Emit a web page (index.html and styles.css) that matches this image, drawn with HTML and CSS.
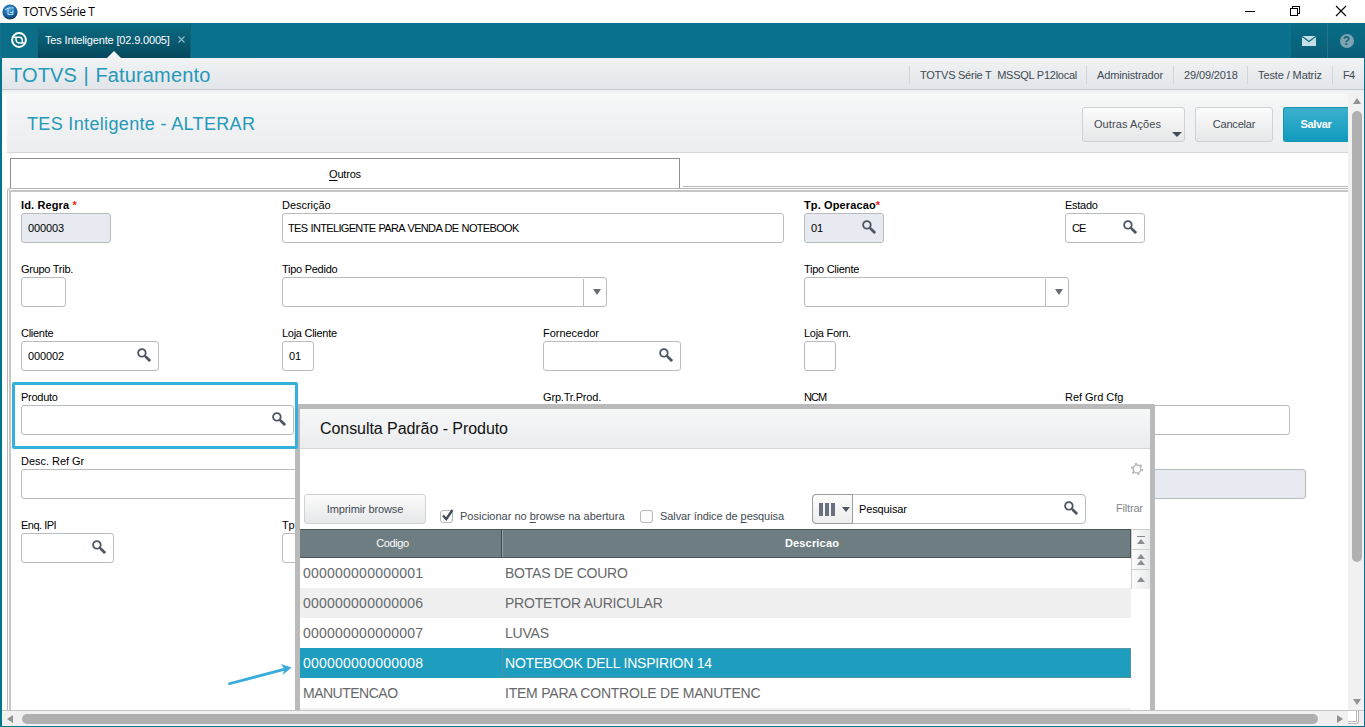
FILE: index.html
```html
<!DOCTYPE html>
<html lang="pt-BR">
<head>
<meta charset="utf-8">
<title>TOTVS Série T</title>
<link rel="stylesheet" href="styles.css">
</head>
<body>
<svg width="0" height="0" class="defs">
  <symbol id="lens" viewBox="0 0 14 14"><circle cx="4.9" cy="4.9" r="3.8" fill="none" stroke="#4d5563" stroke-width="1.8"/><path d="M7.6 7.6l1.500 1.500" stroke="#4d5563" stroke-width="1.800"/><path d="M8.500 8.500l4.600 4.600" stroke="#4d5563" stroke-width="2.7"/></symbol>
</svg>
<header class="titlebar">
  <svg class="app-icon" width="16" height="16" viewBox="0 0 16 16"><defs><radialGradient id="orb" cx=".45" cy=".35" r=".65"><stop offset="0" stop-color="#4aa3dc"/><stop offset=".6" stop-color="#1767a8"/><stop offset="1" stop-color="#143a5e"/></radialGradient></defs><circle cx="8" cy="8" r="7.6" fill="url(#orb)"/><path d="M3 5.5Q7 3 12 4M6 4v6.5h5V6M8 8.5h3" fill="none" stroke="#c9e6f7" stroke-width=".9"/></svg>
  <span class="app-name">TOTVS Série T</span>
  <svg class="win-buttons" width="106" height="14" viewBox="0 0 106 14" fill="none" stroke="#000" shape-rendering="crispEdges"><path d="M2 7.5h10"/><path d="M47.5 4.5h7v7h-7zM49.5 4.5v-2h7v7h-2"/><path d="M93 2l10 10M103 2l-10 10" stroke-width="1.1" shape-rendering="auto"/></svg>
</header>
<nav class="tabstrip">
  <div class="home"><svg width="18" height="18" viewBox="0 0 18 18" fill="none" stroke="#fff"><circle cx="9" cy="9" r="6.900" stroke-width="2"/><path d="M2.800 6.200H9.500Q12.300 6.500 12.300 9V12" stroke-width="1.500"/><path d="M6 6.200V8.800Q6.200 11.700 9 11.900H15.200" stroke-width="1.500"/></svg></div>
  <div class="tab"><span class="tab-text">Tes Inteligente [02.9.0005]</span><svg width="7" height="7" viewBox="0 0 7 7"><path d="M.5.5l6 6M6.500.5l-6 6" stroke="#8fc0cb" stroke-width="1.1"/></svg><i class="notch"></i></div>
  <div class="tool mail"><svg width="14" height="10" viewBox="0 0 14 10"><path d="M0 0h14v10H0z" fill="#c5dfe6"/><path d="M0 0.300L7 5.500 14 .3" fill="none" stroke="#0b6880" stroke-width="1.2"/></svg></div>
  <div class="tool help"><span class="help-dot">?</span></div>
</nav>
<div class="window">
  <div class="infobar">
    <h1>TOTVS | Faturamento</h1>
    <ul class="session"><li class="i1">TOTVS Série T&nbsp; MSSQL P12local</li><li class="i2">Administrador</li><li class="i3">29/09/2018</li><li class="i4">Teste / Matriz</li><li class="i5">F4</li></ul>
  </div>
  <div class="viewport">
    <main class="workspace">
      <div class="page-head">
        <h2>TES Inteligente - ALTERAR</h2>
        <button class="btn more">Outras Ações<i class="caret"></i></button>
        <button class="btn cancel">Cancelar</button>
        <button class="btn save">Salvar</button>
      </div>
      <div class="folder"><div class="folder-tab"><span><u>O</u>utros</span></div><div class="folder-rest"></div></div>
      <section class="form-frame">
        <div class="form">
          <div class="field"><label class="req">Id. Regra <em>*</em></label><div class="box w90 off">000003</div></div>
          <div class="field c2"><label class="wide">Descrição</label><div class="box w502"><span class="caps">TES INTELIGENTE PARA VENDA DE NOTEBOOK</span></div></div>
          <div class="field c4"><label class="req">Tp. Operacao<em>*</em></label><div class="box w80 off look">01<svg><use href="#lens"/></svg></div></div>
          <div class="field c5"><label>Estado</label><div class="box w80 look"><span class="narrow">CE</span><svg><use href="#lens"/></svg></div></div>

          <div class="field r2"><label>Grupo Trib.</label><div class="box w45"></div></div>
          <div class="field r2 c2"><label>Tipo Pedido</label><div class="box w325 select"><i class="drop"></i></div></div>
          <div class="field r2 c4"><label>Tipo Cliente</label><div class="box w265 select"><i class="drop"></i></div></div>

          <div class="field r3"><label>Cliente</label><div class="box w138 look">000002<svg><use href="#lens"/></svg></div></div>
          <div class="field r3 c2"><label>Loja Cliente</label><div class="box w32">01</div></div>
          <div class="field r3 c3"><label class="wide">Fornecedor</label><div class="box w138 look"><svg><use href="#lens"/></svg></div></div>
          <div class="field r3 c4"><label>Loja Forn.</label><div class="box w32"></div></div>

          <div class="field r4"><label>Produto</label><div class="box w273 look"><svg><use href="#lens"/></svg></div></div>
          <div class="field r4 c3"><label class="mid">Grp.Tr.Prod.</label></div>
          <div class="field r4 c4"><label class="ncm">NCM</label></div>
          <div class="field r4 c5"><label class="wide">Ref Grd Cfg</label><div class="box w225"></div></div>

          <div class="field r5"><label class="wide">Desc. Ref Gr</label><div class="box w502"></div></div>
          <div class="field r5 c5"><label></label><div class="box w241 off"></div></div>

          <div class="field r6"><label class="tight">Enq. IPI</label><div class="box w93 look"><svg><use href="#lens"/></svg></div></div>
          <div class="field r6 c2"><label>Tp</label><div class="box w32"></div></div>
        </div>
      </section>
    </main>
    <div class="vscroll"><i class="arrow up"></i><div class="thumb"></div><i class="arrow down"></i></div>
  </div>
  <div class="hscroll"><i class="arrow left"></i><div class="thumb"></div><i class="arrow right"></i><div class="corner"></div></div>
</div>

<section class="dialog">
  <h3>Consulta Padrão - Produto</h3>
  <div class="settings"><svg width="14" height="14" viewBox="0 0 14 14"><circle cx="7" cy="7" r="3.9" fill="none" stroke="#b9b9b9" stroke-width="1.500"/><circle cx="7" cy="7" r="5.300" fill="none" stroke="#b9b9b9" stroke-width="1.800" stroke-dasharray="2.200 3.350"/></svg></div>
  <div class="search-row">
    <button class="btn print">Imprimir browse</button>
    <span class="check on"><svg width="15" height="15" viewBox="0 0 15 15"><path d="M3 7.500l3.200 3.700L12.500 2" fill="none" stroke="#414a58" stroke-width="2.300"/></svg></span>
    <span class="check-text t1">Posicionar no <u>b</u>rowse na abertura</span>
    <span class="check"></span>
    <span class="check-text t2">Salvar índice de <u>p</u>esquisa</span>
    <div class="search"><div class="columns"><i></i><i></i><i></i><b></b></div><span>Pesquisar</span><svg><use href="#lens"/></svg></div>
    <span class="filter">Filtrar</span>
  </div>
  <div class="grid-wrap">
    <div class="grid">
      <div class="row head"><span class="h1c">Codigo</span><span class="h2c">Descricao</span></div>
      <div class="row"><span>000000000000001</span><span>BOTAS DE COURO</span></div>
      <div class="row alt"><span>000000000000006</span><span>PROTETOR AURICULAR</span></div>
      <div class="row"><span>000000000000007</span><span>LUVAS</span></div>
      <div class="row sel"><span>000000000000008</span><span>NOTEBOOK DELL INSPIRION 14</span></div>
      <div class="row"><span class="alpha">MANUTENCAO</span><span>ITEM PARA CONTROLE DE MANUTENC</span></div>
      <div class="row alt"></div>
    </div>
    <div class="nav"><div class="nav-btn top"><i></i></div><div class="nav-btn page"><i></i><i></i></div><div class="nav-btn line"><i></i></div></div>
  </div>
</section>
<div class="highlight"></div>
<svg class="pointer" width="70" height="28" viewBox="0 0 70 28"><path d="M3.300 23L60 8.200" stroke="#38abdc" stroke-width="2.800"/><path d="M66.500 6.500L56 3 59.500 8.300 57.700 14z" fill="#38abdc"/></svg>
</body>
</html>
```
FILE: styles.css
```css
* { box-sizing: border-box; }
body { margin: 0; width: 1365px; height: 727px; overflow: hidden; position: relative; display: flex; flex-direction: column; background: #fff; font: 11px/15px "Liberation Sans", Arial, sans-serif; color: #000; }
h1, h2, h3, ul { margin: 0; padding: 0; font-weight: normal; list-style: none; }
.defs { position: absolute; }
i, em { font-style: normal; }
u { text-underline-offset: 2px; }

/* title bar */
.titlebar { height: 23px; flex: none; display: flex; align-items: center; padding-left: 2px; }
.app-name { font: 12px/22px "Open Sans", "Noto Sans", sans-serif; letter-spacing: -.43px; margin-left: 5px; flex: 1; }
.win-buttons { margin: -2px 16px 0 0; }

/* tab strip */
.tabstrip { height: 35px; flex: none; display: flex; background: #0a728e; padding-left: 2px; color: #fff; }
.home { width: 36px; padding: 8px 0 0 7px; background: #0a6e88; border-right: 1px solid #1b6577; border-left: 1px solid #16697c; }
.tab { position: relative; width: 153px; display: flex; align-items: center; gap: 8px; padding-left: 7px; background: linear-gradient(#0a6c86, #06495c); border-right: 1px solid #0d6278; letter-spacing: -.16px; }
.tab svg { margin-top: -3px; }
.notch { position: absolute; left: 69px; bottom: 0; border: 7px solid transparent; border-top: 0; border-bottom-color: #f1f3f5; }
.tool { background: linear-gradient(#0a6c86, #085f77); display: flex; align-items: center; justify-content: center; border-right: 1px solid #24758a; }
.mail { width: 37px; margin-left: auto; }
.help { width: 37px; border: 0; }
.help-dot { width: 14px; height: 14px; border-radius: 50%; background: #7fa3b0; color: #0a6178; font-weight: bold; line-height: 14px; text-align: center; font-size: 12px; }

/* framed window */
.window { flex: 1; display: flex; flex-direction: column; border: solid #00768c; border-width: 0 1px 1px 2px; min-height: 0; }
.infobar { height: 32px; flex: none; display: flex; align-items: center; padding-left: 8px; background: linear-gradient(#f1f3f5, #e2e5e9); border-bottom: 1px solid #c3c7cb; }
.infobar h1 { font-size: 20px; line-height: 24px; letter-spacing: .15px; word-spacing: .8px; color: #2499b9; margin: 2px auto 0 0; }
.session { display: flex; color: #414a52; line-height: 18px; margin-top: 3px; }
.session li { height: 18px; border-left: 1px solid #d2d6da; padding-left: 10px; white-space: nowrap; }
.i1 { width: 177px; letter-spacing: -.25px; }
.i2 { width: 87px; letter-spacing: -.15px; }
.i3 { width: 74px; letter-spacing: -.12px; }
.i4 { width: 85px; letter-spacing: -.11px; }
.i5 { width: 32px; letter-spacing: -.6px; }
.viewport { flex: 1; min-height: 0; display: flex; background: #f0f1f2; }
.workspace { width: 1346px; padding-top: 3px; overflow: hidden; display: flex; flex-direction: column; background: linear-gradient(#eff1f3 3px, #fff 3px); }
.page-head { height: 60px; flex: none; margin-left: 5px; display: flex; align-items: center; padding: 3px 0 0 20px; background: linear-gradient(#f6f7f7, #ebedef); border-bottom: 1px solid #d5d7da; }
.page-head h2 { font-size: 18px; line-height: 22px; letter-spacing: .34px; color: #2499b9; margin-right: auto; }
.btn { font: 11px/15px "Liberation Sans", Arial, sans-serif; color: #414a52; height: 35px; padding: 0; border: 1px solid #cfd1d3; border-radius: 3px; background: linear-gradient(#fcfcfc, #e6e7e8); white-space: nowrap; flex: none; }
.more { width: 103px; position: relative; padding-right: 12px; letter-spacing: .09px; }
.caret { position: absolute; right: 2px; bottom: 4px; border: 5px solid transparent; border-bottom: 0; border-top-color: #414a55; }
.cancel { width: 78px; margin-left: 10px; letter-spacing: -.2px; }
.save { width: 65px; margin-left: 10px; color: #fff; font-weight: bold; letter-spacing: -.3px; border: 1px solid #1792b2; border-right: 0; border-radius: 3px 0 0 3px; background: linear-gradient(#3cb0ce, #119bbd); }

/* folder and form */
.folder { height: 35px; flex: none; display: flex; padding: 5px 0 0 8px; gap: 3px; }
.folder-tab { width: 670px; border: 1px solid #8e8e8e; border-bottom: 0; display: flex; align-items: center; justify-content: center; letter-spacing: -.2px; padding-top: 2px; }
.folder-rest { flex: 1; height: 29px; border-bottom: 1px solid #b8b8b8; }
.form-frame { flex: 1; min-height: 0; margin-left: 5px; border: solid #b8b8b8; border-width: 1px 0 0 1px; border-top-left-radius: 3px; padding: 1px 0 0 1px; }
.form { height: 100%; border: solid #c6c6c6; border-width: 2px 0 0 2px; padding: 6px 0 0 10px; display: grid; grid-template-columns: repeat(5, 261px); grid-auto-rows: 64px; overflow: hidden; }
.field { grid-column: 1; grid-row: 1; min-width: 0; display: flex; flex-direction: column; }
.c2 { grid-column: 2; } .c3 { grid-column: 3; } .c4 { grid-column: 4; } .c5 { grid-column: 5; }
.r2 { grid-row: 2; } .r3 { grid-row: 3; } .r4 { grid-row: 4; } .r5 { grid-row: 5; } .r6 { grid-row: 6; }
label { height: 15px; letter-spacing: -.27px; white-space: nowrap; flex: none; }
label.wide { letter-spacing: -.03px; }
label.mid { letter-spacing: -.17px; }
label.tight { letter-spacing: -.5px; }
label.ncm { letter-spacing: -.9px; }
label.req { font-weight: bold; letter-spacing: .13px; }
.req em { color: #f02020; }
.box { height: 30px; flex: none; border: 1px solid #b9bbbe; border-radius: 3px; background: #fff; display: flex; align-items: center; padding-left: 6px; letter-spacing: -.12px; white-space: nowrap; }
.off { background: #e7eaf1; }
.w502 { padding-left: 5px; }
.caps { letter-spacing: -.66px; word-spacing: .7px; }
.narrow { letter-spacing: -.9px; }
.look { padding-right: 7px; }
.look svg { width: 14px; height: 14px; margin: -2px 0 0 auto; }
.w32 { width: 32px; } .w45 { width: 45px; } .w80 { width: 80px; } .w90 { width: 90px; } .w93 { width: 93px; } .w138 { width: 138px; } .w225 { width: 225px; } .w241 { width: 241px; } .w265 { width: 265px; } .w273 { width: 273px; } .w325 { width: 325px; } .w502 { width: 502px; }
.select { justify-content: flex-end; }
.drop { width: 23px; height: 27px; border-left: 1px solid #b9bbbe; display: flex; align-items: center; padding-left: 9px; }
.drop::after { content: ""; border: 4px solid transparent; border-top: 6px solid #666e79; border-bottom: 0; }

/* scroll bars */
.vscroll { width: 16px; padding: 8px 2px 5px 3px; background: #f1f1f1; display: flex; flex-direction: column; align-items: center; }
.vscroll .thumb { width: 10px; height: 451px; margin: 7px 0 auto; border-radius: 5px; background: #b0b0b0; }
.hscroll { height: 16px; flex: none; display: flex; align-items: center; padding-left: 5px; background: #f0f0f0; border-top: 1px solid #c4c4c4; }
.hscroll .thumb { width: 1296px; height: 10px; margin-left: 9px; border-radius: 5px; background: #b0b0b0; }
.arrow { border: 4px solid transparent; }
.up { border-top: 0; border-bottom: 6px solid #929292; }
.down { border-bottom: 0; border-top: 6px solid #929292; }
.left { border-left: 0; border-right: 6px solid #929292; }
.right { border-right: 0; border-left: 6px solid #929292; margin-left: 19px; }
.corner { width: 11px; height: 13px; margin: -3px 0 0 5px; border: solid #b8b8b8; border-width: 0 3px 3px 0; border-style: double; border-radius: 0 0 3px 0; background: #fff; }

/* lookup dialog */
.dialog { position: absolute; left: 295px; top: 404px; width: 860px; height: 306px; overflow: hidden; border: 5px solid #bababa; border-bottom: 0; border-radius: 2px 2px 0 0; background: #fff; color: #414a52; display: flex; flex-direction: column; }
.dialog h3 { height: 40px; flex: none; padding-left: 20px; font-size: 16px; line-height: 40px; letter-spacing: -.06px; color: #111; background: linear-gradient(#f6f7f7, #eaecee); border-bottom: 1px solid #d3d5d7; }
.settings { height: 45px; flex: none; display: flex; justify-content: flex-end; padding: 13px 6px 0 0; }
.search-row { height: 35px; flex: none; display: flex; padding-left: 4px; }
.print { width: 122px; height: 30px; letter-spacing: -.12px; }
.check { width: 13px; height: 13px; margin: 16px 0 0 14px; border: 1px solid #b5b7b9; border-radius: 3px; background: #fcfcfc; position: relative; }
.check ~ .check { margin-left: 15px; }
.check svg { position: absolute; left: -1px; top: -3px; }
.check-text { margin: 15px 0 0 7px; white-space: nowrap; }
.t1 { width: 165px; }
.t2 { width: 124px; letter-spacing: -.08px; }
.search { width: 274px; height: 30px; margin-left: 28px; border: 1px solid #b9bbbe; border-radius: 4px; display: flex; align-items: center; color: #000; padding-right: 7px; }
.search span { margin-left: 6px; letter-spacing: -.12px; }
.search svg { width: 14px; height: 14px; margin: -2px 0 0 auto; }
.columns { width: 41px; height: 30px; margin: -1px 0 -1px -1px; border: 1px solid #9a9c9f; border-radius: 4px 0 0 4px; background: linear-gradient(#fcfcfc, #ededee); display: flex; align-items: center; gap: 2px; padding-left: 6px; }
.columns i { width: 4px; height: 13px; background: #687080; }
.columns b { margin-left: 5px; border: 4px solid transparent; border-top: 5px solid #4d5563; border-bottom: 0; }
.filter { margin: 7px 0 0 30px; color: #85888b; letter-spacing: -.18px; }
.grid-wrap { display: flex; }
.grid { width: 831px; flex: none; }
.row { height: 30px; display: grid; grid-template-columns: 202px 1fr; font-size: 14px; line-height: 30px; color: #66686a; }
.row span { padding-left: 3px; letter-spacing: -.22px; white-space: nowrap; }
.row span:first-child { letter-spacing: .23px; }
.row span.alpha:first-child { letter-spacing: -.5px; }
.row.alt { background: #f0f0f0; }
.row.sel { background: #1e9dbe; color: #fff; }
.row.sel span:last-child { outline: 1px dotted #8a8580; outline-offset: -1px; }
.row.head { height: 29px; background: #6e7d81; border: 1px solid #4a5558; border-left-color: #6e7d81; color: #fff; font-size: 11px; line-height: 27px; text-align: center; grid-template-columns: 201px 1fr; }
.row .h1c { border-right: 1px solid #3f494c; padding-right: 20px; }
.row .h1c:first-child { letter-spacing: -.4px; }
.row .h2c { border-left: 1px solid #97a3a6; font-weight: bold; letter-spacing: .18px; padding: 0 9px 0 0; }
.nav { width: 19px; }
.nav-btn { height: 20px; border: 1px solid #ccced0; border-width: 1px 0 0 1px; background: linear-gradient(90deg, #fbfbfb, #e9eaeb); display: flex; flex-direction: column; align-items: center; justify-content: center; }
.nav-btn i { border: 4px solid transparent; border-top: 0; border-bottom: 5px solid #8a8d90; }
.nav-btn.top { padding-top: 3px; }
.nav-btn.top i { position: relative; }
.nav-btn.top i::before { content: ""; position: absolute; left: -4px; top: -3px; width: 8px; height: 1px; background: #8a8d90; }
.page i + i { margin-top: 1px; }

/* annotations */
.highlight { position: absolute; left: 12px; top: 382px; width: 286px; height: 67px; border: 3px solid #35b0dc; border-radius: 2px; }
.pointer { position: absolute; left: 225px; top: 661px; }
```
